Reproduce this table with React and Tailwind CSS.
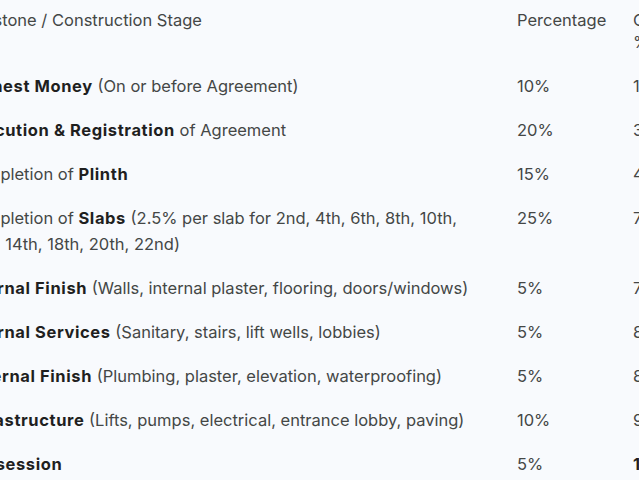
import React from "react";

const rows = [
  { stage: <><b>Earnest Money</b> (On or before Agreement)</>, pct: "10%", cum: "10%" },
  { stage: <><b>Execution &amp; Registration</b> of Agreement</>, pct: "20%", cum: "30%" },
  { stage: <>Completion of <b>Plinth</b></>, pct: "15%", cum: "45%" },
  { stage: <>Completion of <b>Slabs</b> (2.5% per slab for 2nd, 4th, 6th, 8th, 10th, 12th, 14th, 18th, 20th, 22nd)</>, pct: "25%", cum: "70%" },
  { stage: <><b>Internal Finish</b> (Walls, internal plaster, flooring, doors/windows)</>, pct: "5%", cum: "75%" },
  { stage: <><b>Internal Services</b> (Sanitary, stairs, lift wells, lobbies)</>, pct: "5%", cum: "80%" },
  { stage: <><b>External Finish</b> (Plumbing, plaster, elevation, waterproofing)</>, pct: "5%", cum: "85%" },
  { stage: <><b>Infrastructure</b> (Lifts, pumps, electrical, entrance lobby, paving)</>, pct: "10%", cum: "95%" },
  { stage: <><b>Possession</b></>, pct: "5%", cum: <b>100%</b> },
];

export default function App() {
  return (
    <div className="w-[639px] h-[480px] overflow-hidden bg-[#f8fafd] text-[#444746] text-[16.5px] font-['Inter',sans-serif] [&_b]:font-bold [&_b]:tracking-[0.6px] [&_b]:text-[#1f1f1f]">
      <div className="ml-[-55px] pt-px grid grid-cols-[556px_116px_140px]">
        <div className="px-4 pt-2 pb-[11px] leading-[22px]">Milestone / Construction Stage</div>
        <div className="px-4 pt-2 pb-[11px] leading-[22px]">Percentage</div>
        <div className="px-4 pt-2 pb-[11px] leading-[22px] w-[50px] box-content">Cumulative %</div>
        {rows.map((r, i) => (
          <React.Fragment key={i}>
            <div className="pl-[19px] pr-4 py-[9px] leading-[26px]">{r.stage}</div>
            <div className="px-4 py-[9px] leading-[26px]">{r.pct}</div>
            <div className="px-4 py-[9px] leading-[26px]">{r.cum}</div>
          </React.Fragment>
        ))}
      </div>
    </div>
  );
}
